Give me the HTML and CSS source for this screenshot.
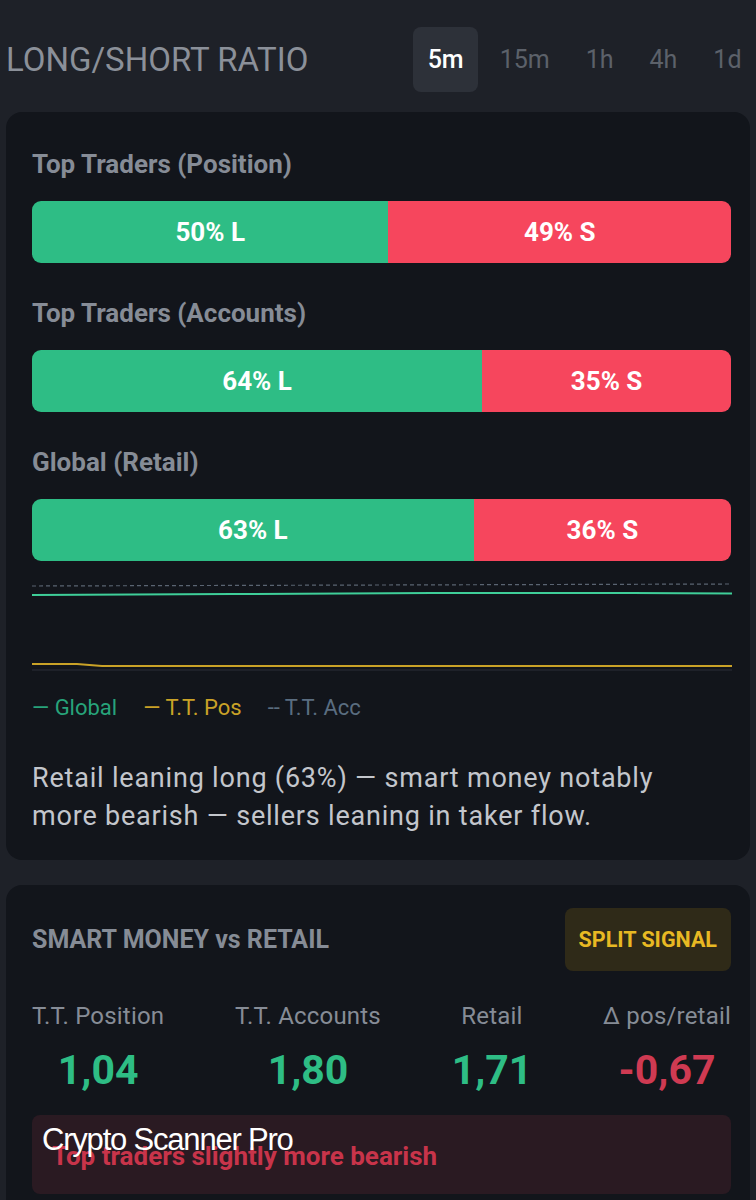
FILE: index.html
```html
<!DOCTYPE html>
<html>
<head>
<meta charset="utf-8">
<link rel="stylesheet" href="styles.css">
</head>
<body>
<div class="page">
  <header class="head">
    <h1 class="title">LONG/SHORT RATIO</h1>
    <nav class="tabs">
      <span class="tab active">5m</span>
      <span class="tab">15m</span>
      <span class="tab">1h</span>
      <span class="tab">4h</span>
      <span class="tab">1d</span>
    </nav>
  </header>

  <section class="card ratios">
    <div class="group">
      <div class="label">Top Traders (Position)</div>
      <div class="bar">
        <div class="long" style="width:51%">50% L</div>
        <div class="short">49% S</div>
      </div>
    </div>
    <div class="group">
      <div class="label">Top Traders (Accounts)</div>
      <div class="bar">
        <div class="long" style="width:64.4%">64% L</div>
        <div class="short">35% S</div>
      </div>
    </div>
    <div class="group">
      <div class="label">Global (Retail)</div>
      <div class="bar">
        <div class="long" style="width:63.2%">63% L</div>
        <div class="short">36% S</div>
      </div>
    </div>

    <svg class="chart" width="700" height="100" viewBox="0 0 700 100">
      <line x1="0" y1="14" x2="700" y2="12" stroke="#5a6472" stroke-width="1.2" stroke-dasharray="4 3"/>
      <path d="M0 23 L200 22 L400 21 L600 21 L700 21.5" fill="none" stroke="#3fcf99" stroke-width="2"/>
      <path d="M0 92 L45 92 L70 94 L300 94 L700 94" fill="none" stroke="#c9a227" stroke-width="1.8"/>
      <line x1="0" y1="98" x2="700" y2="98" stroke="#2a2f38" stroke-width="1"/>
    </svg>

    <div class="legend">
      <span class="lg g">— Global</span>
      <span class="lg y">— T.T. Pos</span>
      <span class="lg b">-- T.T. Acc</span>
    </div>

    <p class="summary">Retail leaning long (63%) — smart money notably more bearish — sellers leaning in taker flow.</p>
  </section>

  <section class="card smart">
    <div class="smart-head">
      <h2 class="smart-title">SMART MONEY vs RETAIL</h2>
      <span class="badge">SPLIT SIGNAL</span>
    </div>
    <div class="stats">
      <div class="stat"><span class="st-label">T.T. Position</span><span class="st-val up">1,04</span></div>
      <div class="stat"><span class="st-label">T.T. Accounts</span><span class="st-val up">1,80</span></div>
      <div class="stat"><span class="st-label">Retail</span><span class="st-val up">1,71</span></div>
      <div class="stat"><span class="st-label">Δ pos/retail</span><span class="st-val down">-0,67</span></div>
    </div>
    <div class="note">Top traders slightly more bearish</div>
    <div class="overlay">Crypto Scanner Pro</div>
  </section>
</div>
</body>
</html>
```

FILE: styles.css
```css
html, body {
  margin: 0;
  padding: 0;
  background: #1e2128;
  overflow: hidden;
}
body {
  font-family: Roboto, "Noto Sans", sans-serif;
  width: 756px;
  height: 1200px;
}
.page {
  padding: 27px 0 0 0;
  display: flex;
  flex-direction: column;
}
.head {
  display: flex;
  align-items: center;
  justify-content: space-between;
  height: 65px;
  padding-left: 6px;
}
.title {
  margin: 0;
  font-size: 33px;
  font-weight: 400;
  color: #8b9099;
}
.tabs {
  display: flex;
  align-items: center;
  gap: 7px;
}
.tab {
  font-size: 25px;
  color: #5c616a;
  height: 65px;
  line-height: 65px;
  padding: 0 14.5px;
  text-align: center;
  border-radius: 8px;
}
.tab.active {
  background: #2d3139;
  color: #ffffff;
  font-weight: 500;
}
.card {
  background: #12151b;
  border-radius: 16px;
  margin: 0 6px;
  padding: 0 19px 0 26px;
}
.ratios {
  margin-top: 20px;
  padding-top: 37px;
  padding-bottom: 25px;
  display: flex;
  flex-direction: column;
  gap: 35px;
}
.group {
  display: flex;
  flex-direction: column;
  gap: 22px;
}
.label {
  font-size: 26px;
  font-weight: 700;
  color: #868c96;
  line-height: 30px;
}
.bar {
  display: flex;
  height: 62px;
  border-radius: 9px;
  overflow: hidden;
}
.long, .short {
  display: flex;
  align-items: center;
  justify-content: center;
  color: #ffffff;
  font-weight: 700;
  font-size: 26px;
}
.long { background: #2ebd85; }
.short { background: #f6465d; flex: 1; }
.chart {
  display: block;
  margin-top: -24px;
}
.legend {
  display: flex;
  gap: 26px;
  margin-top: -12px;
  font-size: 22px;
  line-height: 26px;
}
.lg.g { color: #27a37a; }
.lg.y { color: #c9a227; }
.lg.b { color: #5a6d80; }
.summary {
  margin: 3px 0 0;
  max-width: 650px;
  font-size: 27px;
  line-height: 38px;
  color: #c3c6cc;
  letter-spacing: 0.8px;
}
.smart {
  margin-top: 25px;
  padding-top: 23px;
  padding-bottom: 10px;
  position: relative;
  min-height: 320px;
}
.smart-head {
  display: flex;
  align-items: center;
  justify-content: space-between;
}
.smart-title {
  margin: 0;
  font-size: 25px;
  font-weight: 700;
  color: #868c96;
}
.badge {
  background: #2f2a18;
  color: #e8b923;
  font-weight: 700;
  font-size: 21.5px;
  height: 63px;
  line-height: 63px;
  padding: 0 14px;
  border-radius: 8px;
}
.stats {
  display: flex;
  justify-content: space-between;
  margin-top: 30px;
}
.stat {
  display: flex;
  flex-direction: column;
  align-items: center;
}
.st-label {
  font-size: 24px;
  color: #868c96;
  line-height: 30px;
  letter-spacing: 0.2px;
}
.st-val {
  font-size: 41px;
  font-weight: 700;
  line-height: 46px;
  margin-top: 16px;
}
.up { color: #2ebd85; }
.down { color: #cf3a52; }
.note {
  margin-top: 22px;
  height: 77px;
  background: #2a1a22;
  border-radius: 8px;
  display: flex;
  align-items: center;
  padding: 0 20px;
  color: #c8344a;
  font-weight: 700;
  font-size: 26px;
  padding-top: 2px;
}
.overlay {
  position: absolute;
  left: 36px;
  top: 237px;
  color: #ffffff;
  font-family: "Liberation Sans", Arial, sans-serif;
  font-size: 31px;
  letter-spacing: -1.2px;
}
```
